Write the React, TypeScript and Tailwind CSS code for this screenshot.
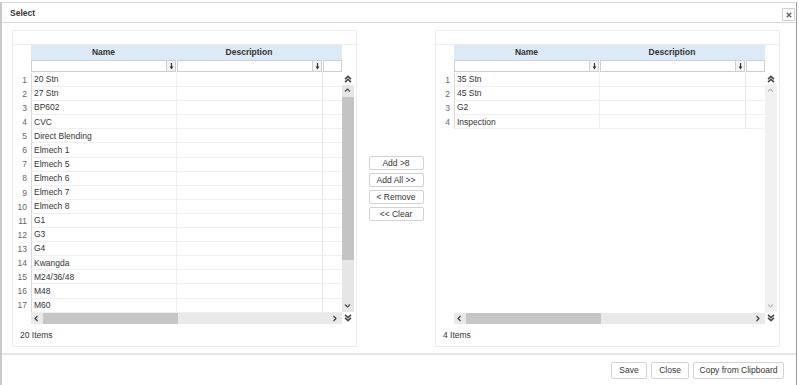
import React from "react";

const FONT = "font-['Liberation_Sans',Arial,sans-serif]";

const leftItems = [
  "20 Stn", "27 Stn", "BP602", "CVC", "Direct Blending", "Elmech 1", "Elmech 5", "Elmech 6",
  "Elmech 7", "Elmech 8", "G1", "G3", "G4", "Kwangda", "M24/36/48", "M48", "M60",
];
const rightItems = ["35 Stn", "45 Stn", "G2", "Inspection"];

function DoubleChevron({ up }: { up: boolean }) {
  return (
    <svg width="8" height="8" viewBox="0 0 8 8" className="block">
      {up ? (
        <g fill="none" stroke="#4a4a4a" strokeWidth="1.6">
          <path d="M1 4.2 L4 1.4 L7 4.2" />
          <path d="M1 7.2 L4 4.4 L7 7.2" />
        </g>
      ) : (
        <g fill="none" stroke="#4a4a4a" strokeWidth="1.6">
          <path d="M1 0.8 L4 3.6 L7 0.8" />
          <path d="M1 3.8 L4 6.6 L7 3.8" />
        </g>
      )}
    </svg>
  );
}

function Chevron({ dir, color }: { dir: "up" | "down" | "left" | "right"; color: string }) {
  const d =
    dir === "up"
      ? "M1 4.5 L3.5 2 L6 4.5"
      : dir === "down"
      ? "M1 2.5 L3.5 5 L6 2.5"
      : dir === "left"
      ? "M4.5 1 L2 3.5 L4.5 6"
      : "M2.5 1 L5 3.5 L2.5 6";
  return (
    <svg width="7" height="7" viewBox="0 0 7 7" className="block">
      <path d={d} fill="none" stroke={color} strokeWidth="1.1" />
    </svg>
  );
}

function DownArrow() {
  return (
    <svg width="5" height="7" viewBox="0 0 5 7" className="block">
      <path d="M2.5 0 L2.5 4" stroke="#333" strokeWidth="1.2" />
      <path d="M0.6 3.6 L4.4 3.6 L2.5 6.6 Z" fill="#333" />
    </svg>
  );
}

function FilterInput({ w, btn }: { w: string; btn: boolean }) {
  return (
    <div className={`${w} h-[12px] border border-[#cfcfcf] bg-white flex justify-end`}>
      {btn && (
        <div className="w-[9px] h-full border-l border-[#cfcfcf] bg-[#f4f4f4] flex items-center justify-center">
          <DownArrow />
        </div>
      )}
    </div>
  );
}

function Panel({ items, count, thumb }: { items: string[]; count: string; thumb: boolean }) {
  return (
    <div className="w-[345px] h-[317px] border border-[#ececec] flex flex-col">
      <div className="h-[14px] border-b border-[#ececec] shrink-0" />
      <div className="flex">
        <div className="w-[329px] flex flex-col">
          {/* header */}
          <div className="flex h-[15px]">
            <div className="w-[18px]" />
            <div className="flex bg-[#dce9f6] text-[#333] font-bold">
              <div className="w-[145px] flex items-center justify-center">Name</div>
              <div className="w-[146px] flex items-center justify-center">Description</div>
              <div className="w-[20px]" />
            </div>
          </div>
          {/* filter */}
          <div className="flex h-[13px] items-start">
            <div className="w-[18px]" />
            <div className="flex gap-[1px]">
              <FilterInput w="w-[145px]" btn />
              <FilterInput w="w-[145px]" btn />
              <FilterInput w="w-[19px]" btn={false} />
            </div>
          </div>
          {/* body */}
          <div className="h-[240px] overflow-hidden">
            {items.map((it, i) => (
              <div key={i} className="flex h-[14.1px]">
                <div className="w-[18px] text-right pr-[4px] text-[#666] flex items-center justify-end">{i + 1}</div>
                <div className="w-[145px] border-l border-[#d8d8d8] border-b border-b-[#f0eef0] pl-[2px] flex items-center text-[#333]">
                  {it}
                </div>
                <div className="w-[146px] border-l border-[#f0f0f0] border-b border-b-[#f0eef0]" />
                <div className="w-[20px] border-l border-[#e6e6e6] border-b border-b-[#f0eef0]" />
              </div>
            ))}
          </div>
          {/* hscroll */}
          <div className="flex h-[11px]">
            <div className="w-[18px]" />
            <div className="w-[311px] bg-[#e9e9e9] flex items-center relative">
              <div className="absolute left-[2px] top-[2px]">
                <Chevron dir="left" color="#333" />
              </div>
              <div className="absolute left-[12px] top-0 h-full w-[135px] bg-[#c6c6c6]" />
              <div className="absolute right-[4px] top-[2px]">
                <Chevron dir="right" color="#333" />
              </div>
            </div>
          </div>
        </div>
        {/* vscroll */}
        <div className="w-[12px] flex flex-col pt-[28px]">
          <div className="h-[12px] flex items-center justify-center">
            <DoubleChevron up />
          </div>
          <div className={`h-[227px] relative ${thumb ? "bg-[#e6e6e6]" : "bg-[#f1f1f1]"}`}>
            <div className="absolute left-[2px] top-[2px]">
              <Chevron dir="up" color={thumb ? "#444" : "#bbb"} />
            </div>
            {thumb && <div className="absolute left-0 w-full top-[12px] h-[163px] bg-[#c4c4c4]" />}
            <div className="absolute left-[2px] bottom-[3px]">
              <Chevron dir="down" color={thumb ? "#444" : "#bbb"} />
            </div>
          </div>
          <div className="h-[11px] flex items-center justify-center">
            <DoubleChevron up={false} />
          </div>
        </div>
      </div>
      <div className="flex-1 flex items-center pl-[7px] text-[#333]">{count}</div>
    </div>
  );
}

function MidButton({ label }: { label: string }) {
  return (
    <div className="w-[55px] h-[14px] border border-[#d2d2d2] rounded-[2px] bg-white flex items-center justify-center text-[#333]">
      {label}
    </div>
  );
}

function FootButton({ label, w }: { label: string; w: string }) {
  return (
    <div className={`${w} h-[17px] border border-[#d2d2d2] rounded-[2px] bg-white flex items-center justify-center text-[#333]`}>
      {label}
    </div>
  );
}

export default function App() {
  return (
    <div className={`w-[799px] h-[385px] bg-white overflow-hidden ${FONT} text-[8.5px] leading-none`}>
      <div className="h-[2px] bg-white" />
      <div className="w-[797px] h-[383px] border-l-2 border-t border-r border-l-[#c9c9c9] border-t-[#dcd4dc] border-r-[#9a9a9a] flex flex-col">
        {/* title */}
        <div className="h-[20px] border-b border-[#dcd8dc] flex items-center justify-between pl-[8px] pr-[1px] shrink-0">
          <span className="font-bold text-[#333] pt-[1px]">Select</span>
          <div className="w-[13px] h-[13px] border border-[#cfcfcf] rounded-[1px] flex items-center justify-center mt-[4px]">
            <svg width="6" height="6" viewBox="0 0 6 6">
              <path d="M0.8 0.8 L5.2 5.2 M5.2 0.8 L0.8 5.2" stroke="#666" strokeWidth="1.5" />
            </svg>
          </div>
        </div>
        {/* body */}
        <div className="flex items-start pl-[10px] pt-[7px] h-[332px] border-b-2 border-[#e4e4e4] shrink-0">
          <Panel items={leftItems} count="20 Items" thumb />
          <div className="w-[78px] h-[317px] flex flex-col items-center justify-center gap-[3px]">
            <MidButton label="Add >8" />
            <MidButton label="Add All >>" />
            <MidButton label="< Remove" />
            <MidButton label="<< Clear" />
          </div>
          <Panel items={rightItems} count="4 Items" thumb={false} />
        </div>
        {/* footer */}
        <div className="flex justify-end gap-[4px] pr-[12px] pt-[7px]">
          <FootButton label="Save" w="w-[36px]" />
          <FootButton label="Close" w="w-[38px]" />
          <FootButton label="Copy from Clipboard" w="w-[91px]" />
        </div>
      </div>
    </div>
  );
}
